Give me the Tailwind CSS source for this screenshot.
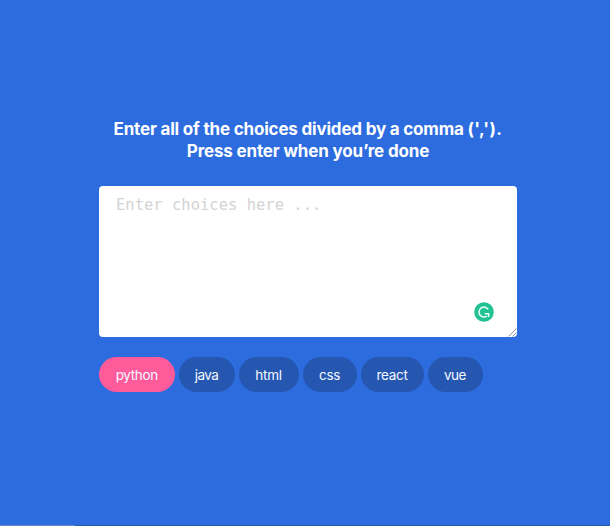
<!DOCTYPE html>
<html lang="en">
<head>
<meta charset="utf-8">
<title>Random Choice Picker</title>
<script src="https://cdn.jsdelivr.net/npm/@tailwindcss/browser@4"></script>
</head>
<body class="h-[526px] overflow-hidden bg-[#2c6cdf] font-['Inter',sans-serif] flex flex-col">
<main class="flex-1 w-[418px] ml-[99px] pt-[117.5px]">
  <h3 class="text-center text-[17px] leading-[22.5px] font-bold text-white whitespace-nowrap"><span class="tracking-[-0.19px]">Enter all of the choices divided by a comma </span><span class="tracking-[0.4px]">(',').</span><br><span class="tracking-[-0.16px]">Press enter when you’re done</span></h3>
  <div class="relative mt-[23.5px] h-[151px]">
    <textarea class="block w-full h-full resize-none rounded-[4px] bg-white px-[17px] py-[9px] font-['DejaVu_Sans_Mono',monospace] text-[15.5px] leading-[20px] text-gray-800 placeholder:text-[#d3d3d3] outline-none" placeholder="Enter choices here ..."></textarea>
    <svg class="absolute left-[375px] top-[116px]" width="20" height="20" viewBox="0 0 20 20" fill="none"><circle cx="10" cy="10" r="9.8" fill="#22c194"/><path d="M14.2 7.4A5 5 0 1 0 13.1 14M10.7 11.7H14.7V15" stroke="#e9fff8" stroke-width="1.5"/></svg>
    <svg class="absolute right-0 bottom-0" width="9" height="9" viewBox="0 0 9 9" fill="none"><path d="M0.5 8.5L8.5 0.5M4.5 8.5L8.5 4.5" stroke="#8d96a8"/></svg>
  </div>
  <div class="mt-[20px] flex h-[35px] gap-[4px] text-[13.5px] text-[#f4f8ff] whitespace-nowrap">
    <span class="flex w-[75.5px] items-center justify-center rounded-full bg-[#ff5b9a] pt-px tracking-[-0.35px]">python</span>
    <span class="flex w-[56px] items-center justify-center rounded-full bg-[#2557b1] pt-px tracking-[-0.6px]">java</span>
    <span class="flex w-[60px] items-center justify-center rounded-full bg-[#2557b1] pt-px tracking-[-0.2px]">html</span>
    <span class="flex w-[54px] items-center justify-center rounded-full bg-[#2557b1] pt-px tracking-[-0.4px]">css</span>
    <span class="flex w-[63px] items-center justify-center rounded-full bg-[#2557b1] pt-px tracking-[-0.3px]">react</span>
    <span class="flex w-[55px] items-center justify-center rounded-full bg-[#2557b1] pt-px tracking-[-0.5px]">vue</span>
  </div>
</main>
<footer class="flex h-px"><div class="w-[75px] bg-[#6588cb]"></div><div class="flex-1 bg-[#285bac]"></div></footer>
</body>
</html>
